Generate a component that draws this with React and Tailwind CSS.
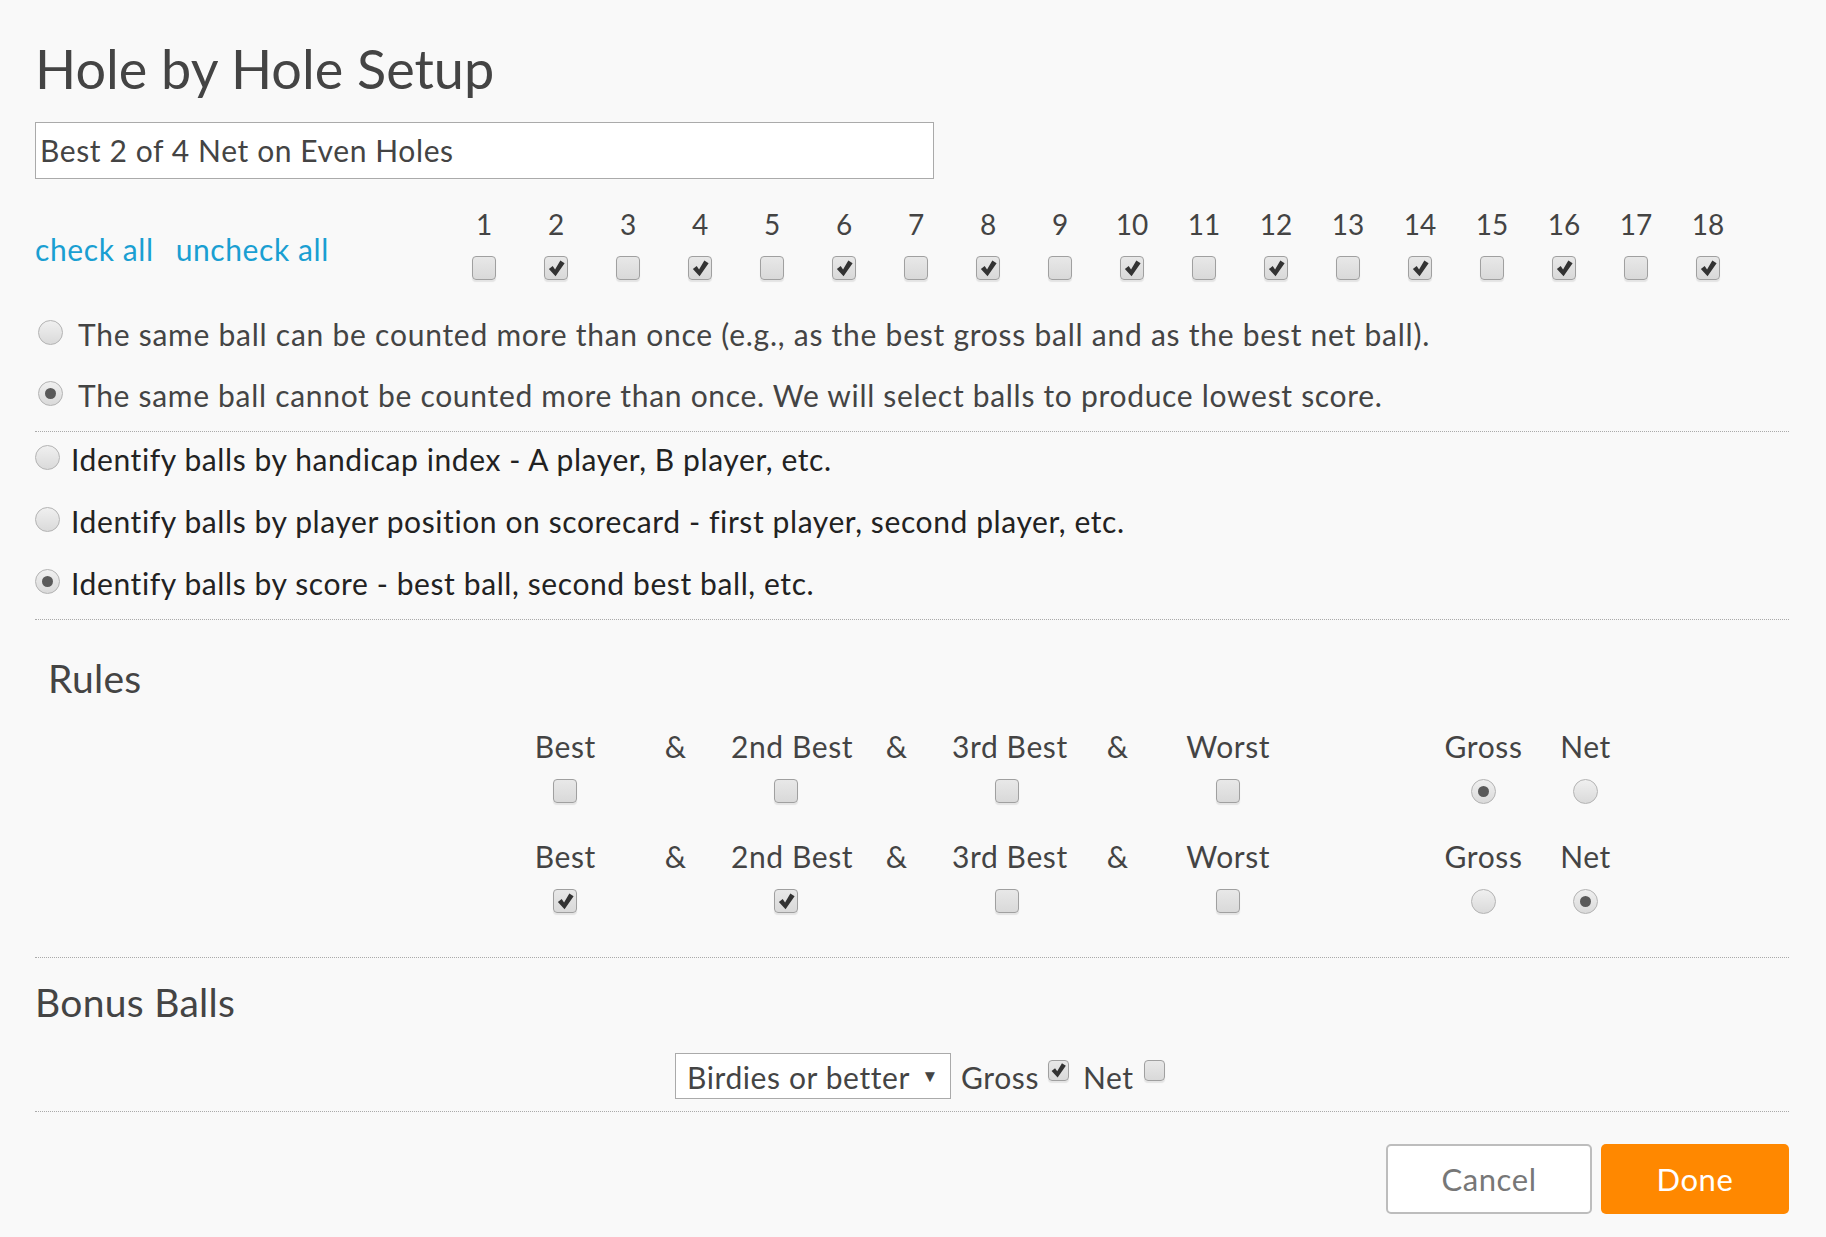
import React from "react";

function Check({ checked, size = 24 }) {
  return (
    <span
      className="relative inline-flex items-center justify-center rounded-[4px] border-[1.5px] border-[#a0a0a0] bg-gradient-to-b from-[#e8e8e8] to-[#d9d9d9] shadow-[0_2px_1px_#e4e4e4]"
      style={{ width: size, height: size }}
    >
      {checked && (
        <svg viewBox="0 0 22 22" className="h-[21px] w-[21px]">
          <path d="M3 11.5 L7 8.5 L9.5 12 L15 2.5 L19.5 5.5 L10 19 Z" fill="#333" />
        </svg>
      )}
    </span>
  );
}

function Radio({ checked }) {
  return (
    <span className="inline-flex h-[25px] w-[25px] shrink-0 items-center justify-center rounded-full border border-[#b3b3b3] bg-gradient-to-b from-[#f0f0f0] to-[#dadada]">
      {checked && <span className="h-[11px] w-[11px] rounded-full bg-[#5a5a5a]" />}
    </span>
  );
}

const holes = Array.from({ length: 18 }, (_, i) => i + 1);

function RuleRow({ checks, gross }) {
  const labels = ["Best", "&", "2nd Best", "&", "3rd Best", "&", "Worst"];
  return (
    <div>
      <div className="flex h-[40px] items-center">
        {labels.map((l, i) => (
          <div key={i} className="w-[110.5px] whitespace-nowrap text-center">{l}</div>
        ))}
        <div className="w-[149px]" />
        <div className="w-[102px] text-center">Gross</div>
        <div className="w-[102px] text-center">Net</div>
      </div>
      <div className="flex h-[50px] items-center">
        {labels.map((l, i) => (
          <div key={i} className="flex w-[110.5px] justify-center">
            {l !== "&" && <Check checked={checks[i / 2]} />}
          </div>
        ))}
        <div className="w-[149px]" />
        <div className="flex w-[102px] justify-center"><Radio checked={gross} /></div>
        <div className="flex w-[102px] justify-center"><Radio checked={!gross} /></div>
      </div>
    </div>
  );
}

export default function App() {
  return (
    <div className="min-h-screen bg-[#f9f9f9] pl-[35px] pr-[37px] pt-[37px] font-['Lato',sans-serif] text-[30px] tracking-[0.6px] text-[#444]">
      <h1 className="h-[64px] text-[54px] font-normal leading-[64px] tracking-normal text-[#444]">Hole by Hole Setup</h1>

      <div className="mt-[21px] flex h-[57px] w-[899px] items-center border border-[#aaaaaa] bg-white pl-[4px] text-[#444]">
        Best 2 of 4 Net on Even Holes
      </div>

      <div className="mt-[29px] flex h-[82px]">
        <div className="flex w-[413px] items-center gap-[22px] text-[#1a9fd2]">
          <span>check all</span>
          <span>uncheck all</span>
        </div>
        <div className="grid grid-cols-[repeat(18,72px)]">
          {holes.map((h) => (
            <div key={h} className="flex flex-col items-center">
              <div className="flex h-[32px] items-center text-[28px] tracking-normal">{h}</div>
              <div className="mt-[6px] flex h-[44px] items-center">
                <Check checked={h % 2 === 0} />
              </div>
            </div>
          ))}
        </div>
      </div>

      <div className="mt-[17px] flex flex-col gap-[11px]">
        <div className="flex h-[50px] items-center gap-[15px] pl-[3px]">
          <Radio checked={false} />
          <span className="pt-[4px] tracking-[0.75px]">The same ball can be counted more than once (e.g., as the best gross ball and as the best net ball).</span>
        </div>
        <div className="flex h-[50px] items-center gap-[15px] pl-[3px]">
          <Radio checked={true} />
          <span className="pt-[4px] tracking-[0.7px]">The same ball cannot be counted more than once. We will select balls to produce lowest score.</span>
        </div>
      </div>

      <div className="mt-[13px] border-t border-dotted border-[#aaaaaa]" />

      <div className="flex flex-col gap-[12px]">
        <div className="flex h-[50px] items-center gap-[11px]">
          <Radio checked={false} />
          <span className="pt-[4px] text-[#222]">Identify balls by handicap index - A player, B player, etc.</span>
        </div>
        <div className="flex h-[50px] items-center gap-[11px]">
          <Radio checked={false} />
          <span className="pt-[4px] text-[#222]">Identify balls by player position on scorecard - first player, second player, etc.</span>
        </div>
        <div className="flex h-[50px] items-center gap-[11px]">
          <Radio checked={true} />
          <span className="pt-[4px] text-[#222]">Identify balls by score - best ball, second best ball, etc.</span>
        </div>
      </div>

      <div className="mt-[13px] border-t border-dotted border-[#aaaaaa]" />

      <div className="mt-[33px] flex h-[50px] items-center pl-[13px] text-[39px] tracking-[0.3px]">Rules</div>

      <div className="mt-[23px] ml-[475px] flex flex-col gap-[20px]">
        <RuleRow checks={[false, false, false, false]} gross={true} />
        <RuleRow checks={[true, true, false, false]} gross={false} />
      </div>

      <div className="mt-[31px] border-t border-dotted border-[#aaaaaa]" />

      <div className="mt-[19px] flex h-[50px] items-center text-[39px] tracking-[0.3px]">Bonus Balls</div>

      <div className="mt-[26px] flex h-[46px] items-center pl-[640px]">
        <div className="flex h-[46px] w-[276px] items-center justify-between border border-[#aaaaaa] bg-white pl-[11px] pr-[11px]">
          <span className="pt-[2px]">Birdies or better</span>
          <span className="text-[17px]">▼</span>
        </div>
        <span className="ml-[10px] pt-[2px]">Gross</span>
        <span className="ml-[9px] -mt-[12px] flex"><Check checked={true} size={21} /></span>
        <span className="ml-[14px] pt-[2px]">Net</span>
        <span className="ml-[10px] -mt-[12px] flex"><Check checked={false} size={21} /></span>
      </div>

      <div className="mt-[12px] border-t border-dotted border-[#aaaaaa]" />

      <div className="mt-[32px] flex justify-end gap-[9px]">
        <button className="h-[70px] w-[206px] rounded-[5px] border-2 border-[#bdbdbd] bg-white text-[31px] text-[#777]">Cancel</button>
        <button className="h-[70px] w-[188px] rounded-[5px] bg-[#ff8800] text-[31px] text-white">Done</button>
      </div>
    </div>
  );
}
